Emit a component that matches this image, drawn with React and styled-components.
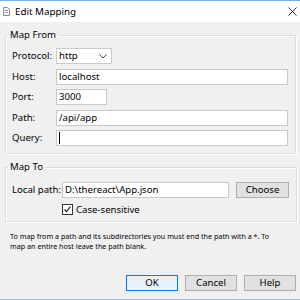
import React from 'react'
import styled, { createGlobalStyle } from 'styled-components'

const GlobalStyle = createGlobalStyle`
  html, body {
    margin: 0;
    padding: 0;
  }
  body {
    font-family: 'Noto Sans', 'Open Sans', sans-serif;
    font-size: 9.6px;
    line-height: 14px;
    color: #000;
  }
`

const Window = styled.div`
  width: 300px;
  height: 300px;
  box-sizing: border-box;
  display: flex;
  flex-direction: column;
  background: #f0f0f0;
  border-top: 1px solid #74b0e6;
  border-bottom: 1px solid #8cbfec;
  overflow: hidden;
`

const TitleBar = styled.div`
  height: 21px;
  flex: none;
  background: #fff;
  display: flex;
  align-items: center;
  padding: 0 3px 0 3px;
  gap: 5px;
`

const Title = styled.span`
  flex: 1;
  font-size: 9.8px;
  color: #000;
`

const Body = styled.div`
  flex: 1;
  display: flex;
  flex-direction: column;
  padding: 6px 4px 8px 5px;
`

const Group = styled.fieldset`
  margin: 0 0 ${p => p.$gap || 0}px 0;
  padding: ${p => p.$pad};
  border: 1px solid #dcdcdc;
  box-shadow: inset 1px 1px 0 #fff, 1px 1px 0 #fff;
`

const Legend = styled.legend`
  padding: 0 2px;
  margin-left: -4px;
  line-height: 14px;
`

const FormGrid = styled.div`
  display: grid;
  grid-template-columns: ${p => p.$label}px 1fr;
  row-gap: 4.5px;
  align-items: center;
`

const Label = styled.span`
  white-space: nowrap;
`

const TextBox = styled.div`
  height: 16px;
  box-sizing: border-box;
  width: ${p => (p.$w ? `${p.$w}px` : 'auto')};
  border: 1px solid #c9c9c9;
  background: #fff;
  padding: 0 2px;
  display: flex;
  align-items: center;
  white-space: nowrap;
  overflow: hidden;
`

const Select = styled(TextBox)`
  justify-content: space-between;
  padding-right: 4px;
`

const Caret = styled.span`
  width: 1px;
  height: 12px;
  background: #000;
`

const PathRow = styled.div`
  display: flex;
  align-items: center;
  gap: 7px;
`

const CheckRow = styled.div`
  grid-column: 2;
  display: flex;
  align-items: center;
  gap: 3px;
`

const CheckBox = styled.span`
  width: 11px;
  height: 11px;
  box-sizing: border-box;
  border: 1px solid #333;
  background: #fff;
  display: flex;
  align-items: center;
  justify-content: center;
`

const Help = styled.p`
  margin: 0 0 0 5px;
  font-size: 7.2px;
  line-height: 10px;
  white-space: nowrap;
  color: #000;
`

const ButtonBar = styled.div`
  margin-top: auto;
  display: flex;
  justify-content: flex-end;
  gap: 7px;
`

const Button = styled.div`
  width: ${p => p.$w || 52}px;
  height: 16px;
  box-sizing: border-box;
  border: 1px solid ${p => (p.$primary ? '#0078d7' : '#adadad')};
  background: ${p => (p.$primary ? '#e5f1fb' : '#e1e1e1')};
  display: flex;
  align-items: center;
  justify-content: center;
`

const DocIcon = () => (
  <svg width="7" height="9" viewBox="0 0 7 9">
    <path d="M0.5 0.5h4l2 2v6h-6z" fill="#f4f4f4" stroke="#8a8a8a" />
    <path d="M2 3.5h3M2 5.5h3" stroke="#9a9a9a" />
  </svg>
)

const CloseIcon = () => (
  <svg width="9" height="9" viewBox="0 0 9 9">
    <path d="M0.5 0.5l8 8M8.5 0.5l-8 8" stroke="#333" strokeWidth="1" />
  </svg>
)

const Chevron = () => (
  <svg width="8" height="5" viewBox="0 0 8 5">
    <path d="M0.5 0.5l3.5 3.5 3.5-3.5" fill="none" stroke="#444" />
  </svg>
)

const Check = () => (
  <svg width="9" height="9" viewBox="0 0 9 9">
    <path d="M1.5 4.5l2 2 4-5" fill="none" stroke="#222" strokeWidth="1.2" />
  </svg>
)

const App = () => {
  return (
    <Window>
      <GlobalStyle />
      <TitleBar>
        <DocIcon />
        <Title>Edit Mapping</Title>
        <CloseIcon />
      </TitleBar>
      <Body>
        <Group $pad="6px 7px 7px 6px" $gap={6}>
          <Legend>Map From</Legend>
          <FormGrid $label={44}>
            <Label>Protocol:</Label>
            <Select $w={56}>
              http
              <Chevron />
            </Select>
            <Label>Host:</Label>
            <TextBox>localhost</TextBox>
            <Label>Port:</Label>
            <TextBox $w={51}>3000</TextBox>
            <Label>Path:</Label>
            <TextBox>/api/app</TextBox>
            <Label>Query:</Label>
            <TextBox>
              <Caret />
            </TextBox>
          </FormGrid>
        </Group>
        <Group $pad="8px 7px 4px 6px" $gap={9}>
          <Legend>Map To</Legend>
          <FormGrid $label={50}>
            <Label>Local path:</Label>
            <PathRow>
              <TextBox $w={167}>D:\thereact\App.json</TextBox>
              <Button $w={53}>Choose</Button>
            </PathRow>
            <CheckRow>
              <CheckBox>
                <Check />
              </CheckBox>
              <Label>Case-sensitive</Label>
            </CheckRow>
          </FormGrid>
        </Group>
        <Help>
          To map from a path and its subdirectories you must end the path with a *. To
          <br />
          map an entire host leave the path blank.
        </Help>
        <ButtonBar>
          <Button $primary>OK</Button>
          <Button>Cancel</Button>
          <Button>Help</Button>
        </ButtonBar>
      </Body>
    </Window>
  )
}

export default App
